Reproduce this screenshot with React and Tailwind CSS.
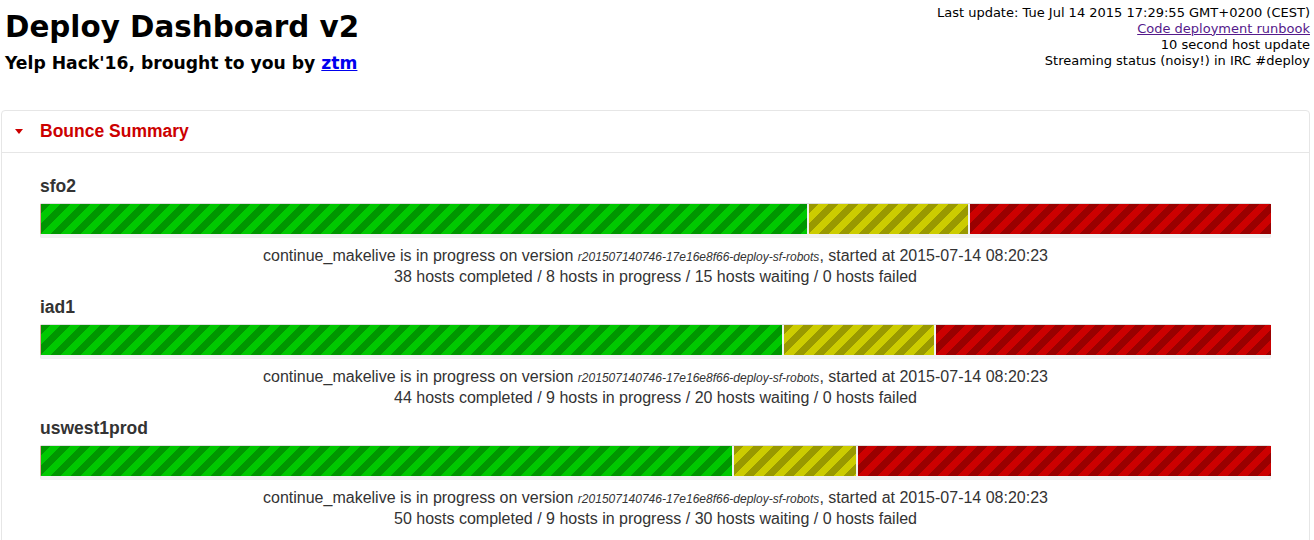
const clusters = [
  { name: 'sfo2', completed: 38, progress: 8, waiting: 15, failed: 0 },
  { name: 'iad1', completed: 44, progress: 9, waiting: 20, failed: 0 },
  { name: 'uswest1prod', completed: 50, progress: 9, waiting: 30, failed: 0 },
];

const stripes =
  'bg-[linear-gradient(135deg,rgba(0,0,0,0.25)_25%,transparent_25%,transparent_50%,rgba(0,0,0,0.25)_50%,rgba(0,0,0,0.25)_75%,transparent_75%,transparent)] bg-[length:20px_20px]';

function BounceBar({ c }) {
  const total = c.completed + c.progress + c.waiting + c.failed;
  const pct = (n) => `${(n / total) * 100}%`;
  return (
    <div className="mt-[7px] h-[35px] bg-[#f2f2f2] pt-px rounded-[2px] shadow-[inset_0_1px_2px_rgba(0,0,0,0.1)]">
      <div className="flex h-[30px]">
        <div className={`h-full border-l border-[#e8a0a0] bg-[#00c800] ${stripes}`} style={{ width: pct(c.completed) }} />
        <div className={`h-full border-l-2 border-[#f2f2f2] bg-[#cccc00] ${stripes}`} style={{ width: pct(c.progress) }} />
        <div className={`h-full border-l-2 border-[#f2f2f2] bg-[#cc0000] ${stripes}`} style={{ width: pct(c.waiting) }} />
      </div>
    </div>
  );
}

function Cluster({ c, first }) {
  return (
    <div className={first ? '' : 'mt-[10px]'}>
      <div className="text-[17.5px] leading-[20px] font-bold text-[#333]">{c.name}</div>
      <BounceBar c={c} />
      <div className="mt-[8px] text-center text-[16px] leading-[20px] text-[#333]">
        <div>
          continue_makelive is in progress on version{' '}
          <span className="italic text-[12px]">r201507140746-17e16e8f66-deploy-sf-robots</span>, started at 2015-07-14 08:20:23
        </div>
        <div>
          {c.completed} hosts completed / {c.progress} hosts in progress / {c.waiting} hosts waiting / {c.failed} hosts failed
        </div>
      </div>
    </div>
  );
}

export default function App() {
  return (
    <div className="min-h-[540px] bg-white text-black">
      <div className="flex justify-between items-start h-[72px]">
        <div className="pl-[5px] font-['DejaVu_Sans',sans-serif] font-bold">
          <h1 className="mt-[11px] text-[29.4px] leading-[32px]">Deploy Dashboard v2</h1>
          <div className="mt-[11px] text-[17.2px] leading-[18px]">
            Yelp Hack'16, brought to you by{' '}
            <a href="#" className="text-[#0000ee] underline">ztm</a>
          </div>
        </div>
        <div className="pt-[4.5px] pr-[4px] text-right font-['DejaVu_Sans',sans-serif] text-[13px] leading-[16px]">
          <div>Last update: Tue Jul 14 2015 17:29:55 GMT+0200 (CEST)</div>
          <div>
            <a href="#" className="text-[#551a8b] underline">Code deployment runbook</a>
          </div>
          <div>10 second host update</div>
          <div>Streaming status (noisy!) in IRC #deploy</div>
        </div>
      </div>

      <div className="mt-[38px] ml-px mr-[4px] rounded-[4px] border border-[#e6e6e6] font-['Liberation_Sans',Arial,sans-serif]">
        <div className="flex items-center pl-[13px] pt-[10px] pb-[11px] border-b border-[#e6e6e6]">
          <span className="w-0 h-0 border-x-4 border-x-transparent border-t-[5px] border-t-[#cc0000]" />
          <span className="ml-[17px] text-[17.5px] leading-[20px] font-bold text-[#cc0000]">Bounce Summary</span>
        </div>
        <div className="px-[38px] pt-[23px] pb-[30px]">
          {clusters.map((c, i) => (
            <Cluster key={c.name} c={c} first={i === 0} />
          ))}
        </div>
      </div>
    </div>
  );
}
